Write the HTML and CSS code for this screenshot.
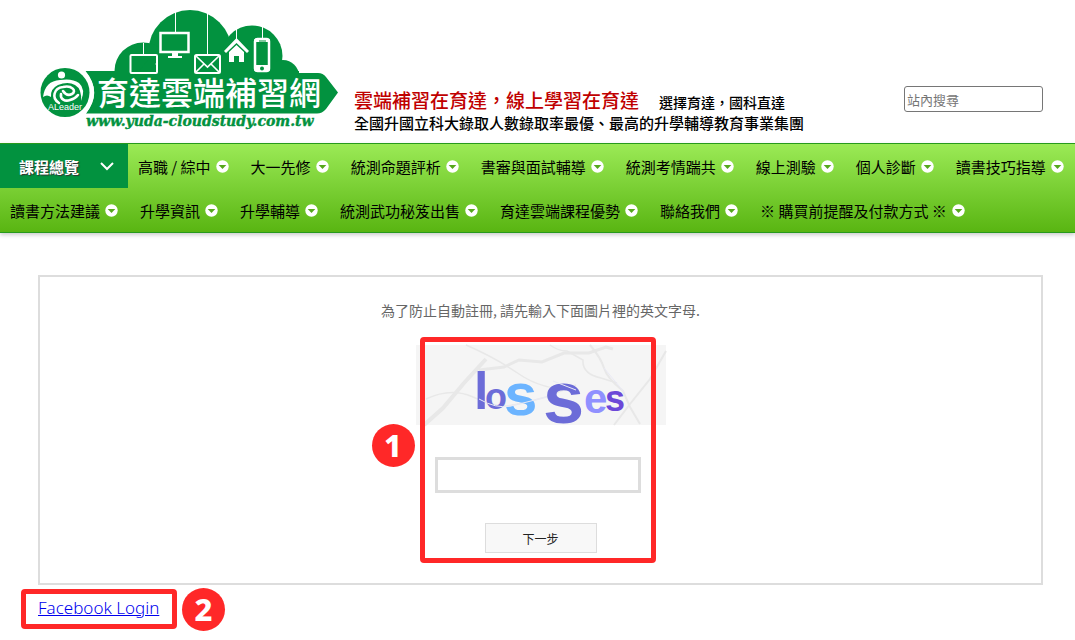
FILE: index.html
```html
<!DOCTYPE html>
<html lang="zh-TW">
<head>
<meta charset="utf-8">
<title>育達雲端補習網</title>
<link rel="stylesheet" href="styles.css">
</head>
<body>
<svg class="defs" width="0" height="0" aria-hidden="true">
  <symbol id="drop" viewBox="0 0 13 13"><circle cx="6.5" cy="6.5" r="6.2" fill="#fff"/><path d="M2.7 5h7.6L6.5 9z" fill="#55a81c"/></symbol>
</svg>
<header class="header">
  <svg class="logo" width="300" height="122" viewBox="39 9 300 122" role="img" aria-label="育達雲端補習網">
    <g fill="#02923f">
      <circle cx="190" cy="51.500" r="41.500"/>
      <circle cx="143" cy="71" r="28.500"/>
      <circle cx="252" cy="56" r="30.500"/>
      <circle cx="283" cy="76" r="16"/>
      <path d="M85 71H299V73H318Q323 73 326 77L338 92.500L326 109Q322 113.500 317 113.500H86Q103 92 85 71z"/>
      <path d="M148 60H276V82H130z"/>
      <circle cx="65" cy="92.500" r="24.500"/>
    </g>
    <path d="M84 71.500Q101 92 84 113.500" fill="none" stroke="#fff" stroke-width="3"/>
    <g fill="none" stroke="#fff">
      <path d="M143.500 43V54M175.500 12V32M207.500 12V54M236.500 29V39M262.500 27V38" stroke-width="1"/>
      <rect x="130.500" y="55" width="26.500" height="18" rx="1" stroke-width="2"/>
      <rect x="160.500" y="33" width="28" height="19" stroke-width="2.500"/>
      <rect x="195" y="55" width="25" height="18" rx="1.500" stroke-width="2"/>
      <path d="M196 56L207.500 67L219 56M196 72L204 64M219 72L211 64" stroke-width="1.700"/>
      <rect x="255" y="39" width="14" height="32" rx="2.500" stroke-width="2.500"/>
    </g>
    <g fill="#fff">
      <circle cx="156.500" cy="64" r="1"/>
      <path d="M172 53H178V56H182V58H168V56H172z"/>
      <path d="M224 51L236.500 38L249 51L247 53L236.500 43L226 53z"/>
      <path d="M229 52L236.500 45L244 52V62H239V56H234V62H229z"/>
      <path d="M254.500 39H269.500V42H254.500zM254.500 65H269.500V71H254.500z"/>
      <circle cx="61.500" cy="75" r="3.600"/>
      <path d="M43 97Q45 81 60 80Q72 78 79 83Q86 89 81 101Q82 89 75 85Q68 81 58 85Q50 89 51 97Q47 94 43 97z"/>
    </g>
    <g fill="none" stroke="#fff" stroke-linecap="round">
      <path d="M59 103C51 98 54 88 63 87C72 85 77 91 72 94C68 96 65 94 63 91" stroke-width="2.600"/>
      <path d="M61 94C60 99 65 102 70 100Q75 99 78 95" stroke-width="2.600"/>
    </g>
    <circle cx="262" cy="68.500" r="2" fill="#02923f"/>
    <path d="M259 41H266" stroke="#02923f"/>
    <text class="logo-brand" x="48" y="110">ALeader</text>
    <text class="logo-name" x="97" y="105">育達雲端補習網</text>
    <text class="logo-url" x="86" y="126">www.yuda-cloudstudy.com.tw</text>
  </svg>
  <div class="slogan">
    <div class="slogan-top"><strong class="slogan-main">雲端補習在育達，線上學習在育達</strong><span class="slogan-side">選擇育達，國科直達</span></div>
    <div class="slogan-sub">全國升國立科大錄取人數錄取率最優、最高的升學輔導教育事業集團</div>
  </div>
  <input class="search" type="search" placeholder="站內搜尋" aria-label="站內搜尋">
</header>
<nav class="nav">
  <a class="item current" href="#">課程總覽<svg width="14" height="9" viewBox="0 0 14 9"><path d="M1 1L7 7L13 1" fill="none" stroke="#fff" stroke-width="2"/></svg></a>
  <a class="item" href="#">高職 / 綜中<svg class="drop"><use href="#drop"/></svg></a>
  <a class="item" href="#">大一先修<svg class="drop"><use href="#drop"/></svg></a>
  <a class="item" href="#">統測命題評析<svg class="drop"><use href="#drop"/></svg></a>
  <a class="item" href="#">書審與面試輔導<svg class="drop"><use href="#drop"/></svg></a>
  <a class="item" href="#">統測考情踹共<svg class="drop"><use href="#drop"/></svg></a>
  <a class="item" href="#">線上測驗<svg class="drop"><use href="#drop"/></svg></a>
  <a class="item" href="#">個人診斷<svg class="drop"><use href="#drop"/></svg></a>
  <a class="item" href="#">讀書技巧指導<svg class="drop"><use href="#drop"/></svg></a>
  <a class="item" href="#">讀書方法建議<svg class="drop"><use href="#drop"/></svg></a>
  <a class="item" href="#">升學資訊<svg class="drop"><use href="#drop"/></svg></a>
  <a class="item" href="#">升學輔導<svg class="drop"><use href="#drop"/></svg></a>
  <a class="item" href="#">統測武功秘笈出售<svg class="drop"><use href="#drop"/></svg></a>
  <a class="item" href="#">育達雲端課程優勢<svg class="drop"><use href="#drop"/></svg></a>
  <a class="item" href="#">聯絡我們<svg class="drop"><use href="#drop"/></svg></a>
  <a class="item" href="#">※ 購買前提醒及付款方式 ※<svg class="drop"><use href="#drop"/></svg></a>
</nav>
<main class="main">
  <section class="panel">
    <label class="prompt" for="captcha">為了防止自動註冊, 請先輸入下面圖片裡的英文字母.</label>
    <form class="form">
      <svg class="captcha" width="250" height="80" viewBox="0 0 250 80" role="img" aria-label="驗證圖片">
        <rect width="250" height="80" fill="#f5f5f5"/>
        <g fill="none" stroke="#e8e8e8">
          <path d="M8 80L27 63L48 38L70 14" stroke-width="4"/>
          <path d="M63 25L88 22L103 15L126 17L148 8L173 8L190 2L197 4" stroke-width="3"/>
          <path d="M50 0Q80 13 103 29T160 45M10 54Q35 42 57 52T90 61T130 52L160 40M134 0Q142 6 151 6L167 15Q166 29 185 33L201 38" stroke-width="1.500"/>
          <path d="M174 0Q185 13 188 23T207 46L214 62L224 79M198 80L214 59L234 34L250 6" stroke-width="2"/>
        </g>
        <g class="captcha-text">
          <text class="size-l violet" x="58" y="64">l</text>
          <text class="size-s violet" x="69" y="64">o</text>
          <text class="size-xl sky" x="88" y="70">s</text>
          <text class="size-xxl violet" x="127" y="78">s</text>
          <text class="size-m lilac" x="168" y="68">e</text>
          <text class="size-s purple" x="189" y="66">s</text>
        </g>
        <path d="M63 54Q80 64 94 61T130 52M137 36L160 45M188 23L208 47" fill="none" stroke="#eaeaf5"/>
      </svg>
      <input class="answer" id="captcha" type="text">
      <button class="next" type="button">下一步</button>
      <span class="frame frame-form"></span>
      <span class="badge badge-form">1</span>
    </form>
  </section>
  <div class="login">
    <a class="login-link" href="#">Facebook Login</a>
    <span class="frame frame-login"></span>
    <span class="badge badge-login">2</span>
  </div>
</main>
</body>
</html>
```

FILE: styles.css
```css
* { box-sizing: border-box; }
body {
  min-height: 100vh;
  margin: 0;
  background: #fff;
  color: #000;
  font-family: "Noto Sans", "Noto Sans CJK TC", sans-serif;
}
.defs { position: absolute; }
.header {
  display: flex;
  align-items: flex-start;
  padding: 9px 32px 12px 39px;
}
.logo { flex: none; }
.logo-brand { font: 9px "Liberation Sans", sans-serif; fill: #fff; }
.logo-name { font: 500 32px "Noto Sans CJK TC", sans-serif; fill: #fff; }
.logo-url {
  font: italic bold 14px "DejaVu Serif", serif;
  fill: #02923f;
  stroke: #02923f;
  stroke-width: .4px;
}
.slogan {
  margin: 77px 0 0 15px;
  font-family: "Noto Sans CJK TC", sans-serif;
  font-weight: 500;
  white-space: nowrap;
}
.slogan-top { display: flex; align-items: baseline; gap: 20px; height: 28px; line-height: 28px; }
.slogan-main { font-size: 19px; font-weight: 500; color: #c00000; }
.slogan-side { font-size: 14px; line-height: 24px; }
.slogan-sub { font-size: 15px; line-height: 17px; }
.search {
  width: 139px;
  height: 26px;
  margin: 77px 0 0 auto;
  padding: 1px 2px;
  border: 1px solid #767676;
  border-radius: 3px;
  font: 13px "Noto Sans CJK TC", sans-serif;
}
.nav {
  display: flex;
  flex-wrap: wrap;
  column-gap: 12px;
  border-top: 1px solid #279a1c;
  border-bottom: 1px solid #279a1c;
  background: linear-gradient(#9bea56, #59b512);
  box-shadow: 0 2px 4px rgba(0, 0, 0, .2);
}
.item {
  display: flex;
  align-items: center;
  gap: 5px;
  height: 44px;
  padding-left: 10px;
  color: #000;
  font: 15px "Noto Sans CJK TC", sans-serif;
  text-decoration: none;
  white-space: nowrap;
}
.drop { width: 13px; height: 13px; }
.current {
  justify-content: space-between;
  width: 128px;
  margin-right: -12px;
  padding: 0 14px 0 19px;
  background: #02923f;
  color: #fff;
  font-weight: bold;
  text-shadow: 1px 1px 1px #333;
}
.main { padding: 42px 32px 20px 38px; }
.panel {
  display: flex;
  flex-direction: column;
  align-items: center;
  padding: 23px 0 30px;
  border: 2px solid #ddd;
}
.prompt {
  color: #666;
  font: 14px/20px "Noto Sans CJK TC", sans-serif;
}
.form {
  position: relative;
  display: flex;
  flex-direction: column;
  align-items: center;
  width: 250px;
  margin-top: 25px;
}
.captcha { display: block; overflow: visible; }
.captcha-text { font-family: "Liberation Sans", sans-serif; font-weight: bold; }
.size-s { font-size: 36px; }
.size-m { font-size: 42px; }
.size-l { font-size: 52px; }
.size-xl { font-size: 60px; }
.size-xxl { font-size: 74px; }
.violet { fill: #6c6cd8; }
.sky { fill: #6cb4ff; }
.lilac { fill: #9090ff; }
.purple { fill: #6c48d8; }
.answer {
  width: 206px;
  height: 36px;
  margin: 32px 6px 30px 0;
  border: 3px solid #ddd;
  font-size: 16px;
}
.next {
  width: 112px;
  height: 30px;
  border: 1px solid #ddd;
  background: #f8f8f8;
  color: #222;
  font: 12px "Noto Sans CJK TC", sans-serif;
}
.frame {
  position: absolute;
  border: 5px solid #ff2828;
  border-radius: 4px;
  pointer-events: none;
}
.frame-form { inset: -8px 10px -10px 4px; }
.badge {
  position: absolute;
  width: 43px;
  height: 43px;
  border-radius: 50%;
  background: #ff2828;
  color: #fff;
  font: 800 31px/43px "Noto Sans", sans-serif;
  text-align: center;
}
.badge-form { top: 79px; left: -44px; }
.login {
  position: relative;
  width: max-content;
  margin-top: 11px;
  line-height: 24px;
}
.login-link { color: #0000ee; font-size: 17px; font-weight: 300; }
.frame-login { inset: -7px -18px -9px -17px; }
.badge-login { top: -8px; left: 144px; }
```
